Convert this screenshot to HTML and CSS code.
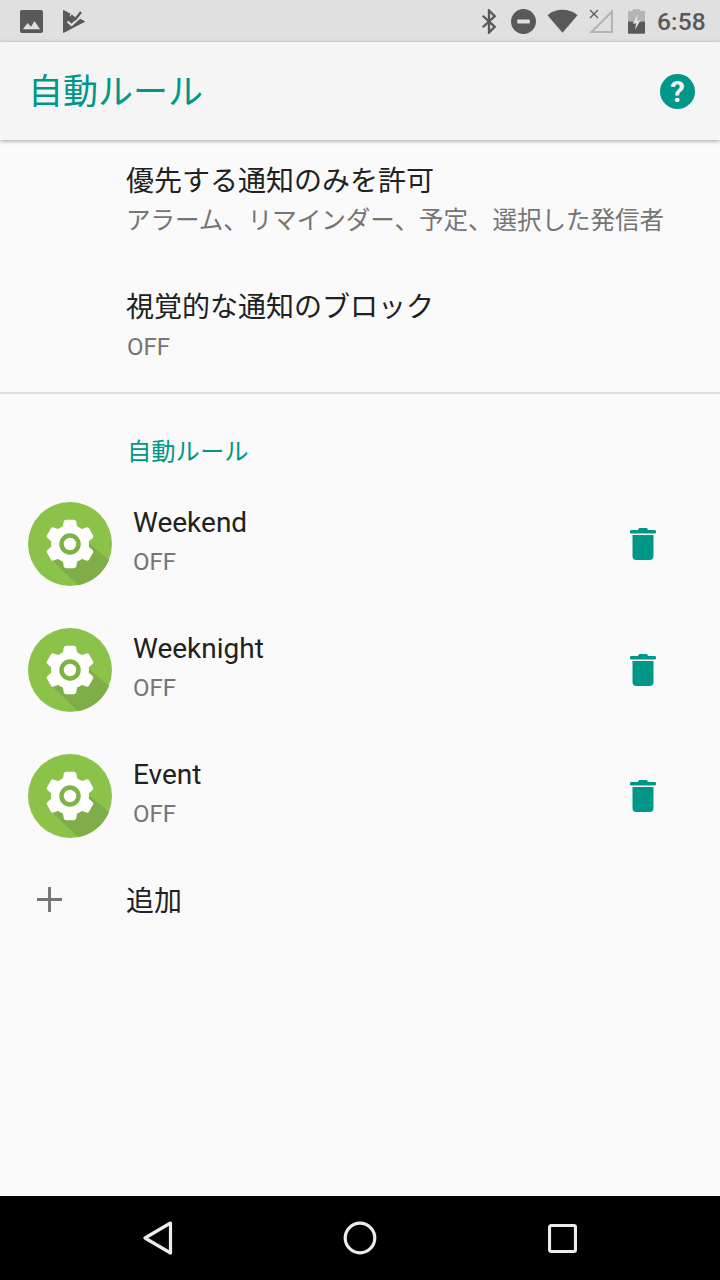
FILE: index.html
```html
<!DOCTYPE html>
<html lang="ja">
<head>
<meta charset="utf-8">
<title>自動ルール</title>
<link rel="stylesheet" href="styles.css">
</head>
<body>
<div class="screen">
  <header class="status">
    <div class="status-left">
      <svg class="ic-image" viewBox="0 0 24 24"><path fill="#595959" d="M2 0h20a2 2 0 0 1 2 2v20a2 2 0 0 1-2 2H2a2 2 0 0 1-2-2V2a2 2 0 0 1 2-2z"/><path fill="#e0e0e0" d="M3 20l5-6.500 3.500 4 3.500-6 6 8.500z"/></svg>
      <svg class="ic-play" viewBox="0 0 22 23"><path fill="#595959" stroke="#595959" stroke-linejoin="round" d="M.5.5L21.500 11.500.5 22.500z"/><path fill="none" stroke="#e0e0e0" stroke-width="2.200" d="M4.500 11.500l4 3.500L17 7.500"/><path fill="none" stroke="#e0e0e0" stroke-width="4.500" d="M8 3.500l4.500 4L19 0"/><path fill="none" stroke="#595959" stroke-width="2.400" d="M8 5.500l4.500 3.500L18 2"/></svg>
    </div>
    <div class="status-right">
      <svg class="ic-bt" viewBox="0 0 16 26"><path fill="none" stroke="#595959" stroke-width="2.400" d="M1.500 7l12.500 11.500-6 6V1.500l6 6L1.500 19"/></svg>
      <svg class="ic-dnd" viewBox="0 0 26 26"><circle cx="13" cy="13" r="13" fill="#595959"/><rect x="6.500" y="11" width="13" height="4" rx=".5" fill="#e0e0e0"/></svg>
      <svg class="ic-wifi" viewBox="0 0 32 24"><path fill="#595959" d="M16 24L.5 6C4.500 2.500 10 .5 16 .5S27.500 2.500 31.500 6z"/></svg>
      <svg class="ic-signal" viewBox="0 0 24 24"><path fill="none" stroke="#b4b4b4" stroke-width="2.200" d="M2.500 23L23 2.500V23z"/><path fill="none" stroke="#595959" stroke-width="1.300" d="M1 1l8 8M9 1l-8 8"/></svg>
      <svg class="ic-batt" viewBox="0 0 18 26"><path fill="#b4b4b4" d="M5 2V0h8v2h4a1 1 0 0 1 1 1v10H0V3a1 1 0 0 1 1-1z"/><path fill="#595959" d="M0 13h18v12a1 1 0 0 1-1 1H1a1 1 0 0 1-1-1z"/><path fill="#e0e0e0" d="M10.500 5L5 15h3.500l-1 7L13 12H9.500z"/></svg>
      <span class="clock">6:58</span>
    </div>
  </header>

  <div class="appbar">
    <h1 class="appbar-title">自動ルール</h1>
    <svg class="ic-help" viewBox="0 0 36 36"><circle cx="18" cy="18" r="18" fill="#009688"/><text x="18" y="28.500" class="help-mark">?</text></svg>
  </div>

  <main class="content">
    <section class="prefs">
      <div class="pref">
        <div class="pref-title">優先する通知のみを許可</div>
        <div class="pref-sub">アラーム、リマインダー、予定、選択した発信者</div>
      </div>
      <div class="pref">
        <div class="pref-title">視覚的な通知のブロック</div>
        <div class="pref-off">OFF</div>
      </div>
    </section>

    <section class="rules">
      <div class="category">自動ルール</div>

      <div class="rule">
        <svg class="gear" viewBox="0 0 84 84"><use href="#gear-badge"/></svg>
        <div class="rule-text">
          <div class="rule-name">Weekend</div>
          <div class="rule-off">OFF</div>
        </div>
        <svg class="trash" viewBox="0 0 26 32"><use href="#trash"/></svg>
      </div>

      <div class="rule">
        <svg class="gear" viewBox="0 0 84 84"><use href="#gear-badge"/></svg>
        <div class="rule-text">
          <div class="rule-name">Weeknight</div>
          <div class="rule-off">OFF</div>
        </div>
        <svg class="trash" viewBox="0 0 26 32"><use href="#trash"/></svg>
      </div>

      <div class="rule">
        <svg class="gear" viewBox="0 0 84 84"><use href="#gear-badge"/></svg>
        <div class="rule-text">
          <div class="rule-name">Event</div>
          <div class="rule-off">OFF</div>
        </div>
        <svg class="trash" viewBox="0 0 26 32"><use href="#trash"/></svg>
      </div>

      <div class="add">
        <svg class="plus" viewBox="0 0 26 26"><path fill="#757575" d="M11.500 0h3v11.500H26v3H14.500V26h-3V14.500H0v-3h11.500z"/></svg>
        <div class="add-label">追加</div>
      </div>
    </section>
  </main>

  <nav class="navbar">
    <svg class="nav-back" viewBox="0 0 30 34"><path fill="none" stroke="#ececec" stroke-width="3.200" stroke-linejoin="round" d="M27.500 2L2 17l25.500 15z"/></svg>
    <svg class="nav-home" viewBox="0 0 34 34"><circle cx="17" cy="17" r="14.800" fill="none" stroke="#ececec" stroke-width="3.200"/></svg>
    <svg class="nav-recent" viewBox="0 0 30 30"><rect x="1.600" y="1.600" width="26.800" height="26.800" rx="1.500" fill="none" stroke="#ececec" stroke-width="3.200"/></svg>
  </nav>
</div>

<svg class="defs" aria-hidden="true">
  <defs>
    <symbol id="gear-badge" viewBox="0 0 84 84">
      <circle cx="42" cy="42" r="42" fill="#8bc34a"/>
      <path fill="#7fae48" d="M24 58L50 83.200A42 42 0 0 0 81 58L62 42z"/>
      <g fill="#fff">
        <circle cx="42" cy="42" r="19"/>
        <path d="M34.500 27l1.300-7.500a2.500 2.500 0 0 1 2.400-1.800h7.600a2.500 2.500 0 0 1 2.400 1.800l1.300 7.500z"/>
        <path d="M34.500 27l1.300-7.500a2.500 2.500 0 0 1 2.400-1.800h7.600a2.500 2.500 0 0 1 2.400 1.800l1.300 7.500z" transform="rotate(60 42 42)"/>
        <path d="M34.500 27l1.300-7.500a2.500 2.500 0 0 1 2.400-1.800h7.600a2.500 2.500 0 0 1 2.400 1.800l1.300 7.500z" transform="rotate(120 42 42)"/>
        <path d="M34.500 27l1.300-7.500a2.500 2.500 0 0 1 2.400-1.800h7.600a2.500 2.500 0 0 1 2.400 1.800l1.300 7.500z" transform="rotate(180 42 42)"/>
        <path d="M34.500 27l1.300-7.500a2.500 2.500 0 0 1 2.400-1.800h7.600a2.500 2.500 0 0 1 2.400 1.800l1.300 7.500z" transform="rotate(240 42 42)"/>
        <path d="M34.500 27l1.300-7.500a2.500 2.500 0 0 1 2.400-1.800h7.600a2.500 2.500 0 0 1 2.400 1.800l1.300 7.500z" transform="rotate(300 42 42)"/>
      </g>
      <circle cx="42" cy="42" r="8.500" fill="#fff" stroke="#7cb342" stroke-width="4.500"/>
    </symbol>
    <symbol id="trash" viewBox="0 0 26 32">
      <path fill="#009688" d="M8 2l1-2h8l1 2h6.500a1.700 1.700 0 0 1 0 3.500H1.500a1.700 1.700 0 0 1 0-3.500z"/>
      <path fill="#009688" d="M2.500 7h21v21a4 4 0 0 1-4 4h-13a4 4 0 0 1-4-4z"/>
    </symbol>
  </defs>
</svg>
</body>
</html>
```
FILE: styles.css
```css
* { box-sizing: border-box; }
html, body { margin: 0; padding: 0; }
body {
  width: 720px;
  height: 1280px;
  overflow: hidden;
  background: #fafafa;
  font-family: Roboto, "Noto Sans CJK JP", sans-serif;
}
.screen {
  width: 720px;
  height: 1280px;
  display: flex;
  flex-direction: column;
  overflow: hidden;
}
.defs { width: 0; height: 0; display: block; }

/* status bar */
.status {
  height: 42px;
  flex: none;
  background: #e0e0e0;
  display: flex;
  align-items: center;
  justify-content: space-between;
  padding: 0 14px 0 20px;
}
.status-left, .status-right { display: flex; align-items: center; }
.ic-image { width: 23px; height: 23px; }
.ic-play { width: 22px; height: 23px; margin-left: 20px; }
.ic-bt { width: 16px; height: 25px; }
.ic-dnd { width: 25px; height: 25px; margin-left: 14px; }
.ic-wifi { width: 31px; height: 24px; margin-left: 11px; }
.ic-signal { width: 24px; height: 24px; margin-left: 11px; }
.ic-batt { width: 17px; height: 25px; margin-left: 15px; }
.clock {
  margin-left: 12px;
  font-size: 24.500px;
  font-weight: 500;
  color: #595959;
  letter-spacing: .2px;
}

/* app bar */
.appbar {
  height: 98px;
  flex: none;
  background: #f5f5f5;
  display: flex;
  align-items: center;
  justify-content: space-between;
  padding: 0 25px 0 28px;
  box-shadow: 0 1px 4px rgba(0, 0, 0, .35);
  position: relative;
  z-index: 1;
}
.appbar-title {
  margin: 2px 0 0;
  font-size: 35px;
  font-weight: 400;
  color: #009688;
  line-height: 1;
}
.ic-help { width: 35px; height: 35px; }
.help-mark {
  font-family: Roboto, sans-serif;
  font-size: 30px;
  font-weight: 700;
  fill: #f5f5f5;
  text-anchor: middle;
}

/* content */
.content { flex: 1; min-height: 0; background: #fafafa; }
.prefs {
  height: 254px;
  border-bottom: 2px solid #e0e0e0;
  padding-top: 21px;
}
.pref { height: 126px; padding-left: 126px; }
.pref-title {
  font-size: 28px;
  line-height: 42px;
  color: #212121;
}
.pref-sub {
  font-size: 24.500px;
  line-height: 36px;
  color: #757575;
  white-space: nowrap;
}
.pref-off {
  font-size: 24px;
  line-height: 36px;
  color: #757575;
  padding-left: 1px;
}
.rules { padding-top: 40px; }
.category {
  padding-left: 127px;
  font-size: 24.300px;
  line-height: 36px;
  font-weight: 400;
  color: #009688;
  margin-bottom: 11px;
}
.rule {
  height: 126px;
  display: flex;
  align-items: center;
  padding: 0 64px 0 28px;
}
.gear { width: 84px; height: 84px; flex: none; }
.rule-text { flex: 1; margin-left: 21px; padding-bottom: 4px; }
.rule-name {
  font-size: 28px;
  line-height: 40px;
  color: #212121;
}
.rule-off {
  font-size: 24px;
  line-height: 38px;
  color: #757575;
}
.trash { width: 26px; height: 32px; flex: none; }
.add {
  height: 84px;
  margin-top: -2px;
  display: flex;
  align-items: center;
  padding-left: 37px;
}
.plus { width: 25px; height: 25px; flex: none; }
.add-label {
  margin-left: 64px;
  font-size: 28px;
  color: #212121;
}

/* nav bar */
.navbar {
  height: 84px;
  flex: none;
  background: #000;
  display: grid;
  grid-template-columns: 1fr auto 1fr;
  align-items: center;
  padding: 0 143px;
}
.nav-back { width: 30px; height: 34px; justify-self: start; }
.nav-home { width: 34px; height: 34px; }
.nav-recent { width: 29px; height: 29px; justify-self: end; }
```
